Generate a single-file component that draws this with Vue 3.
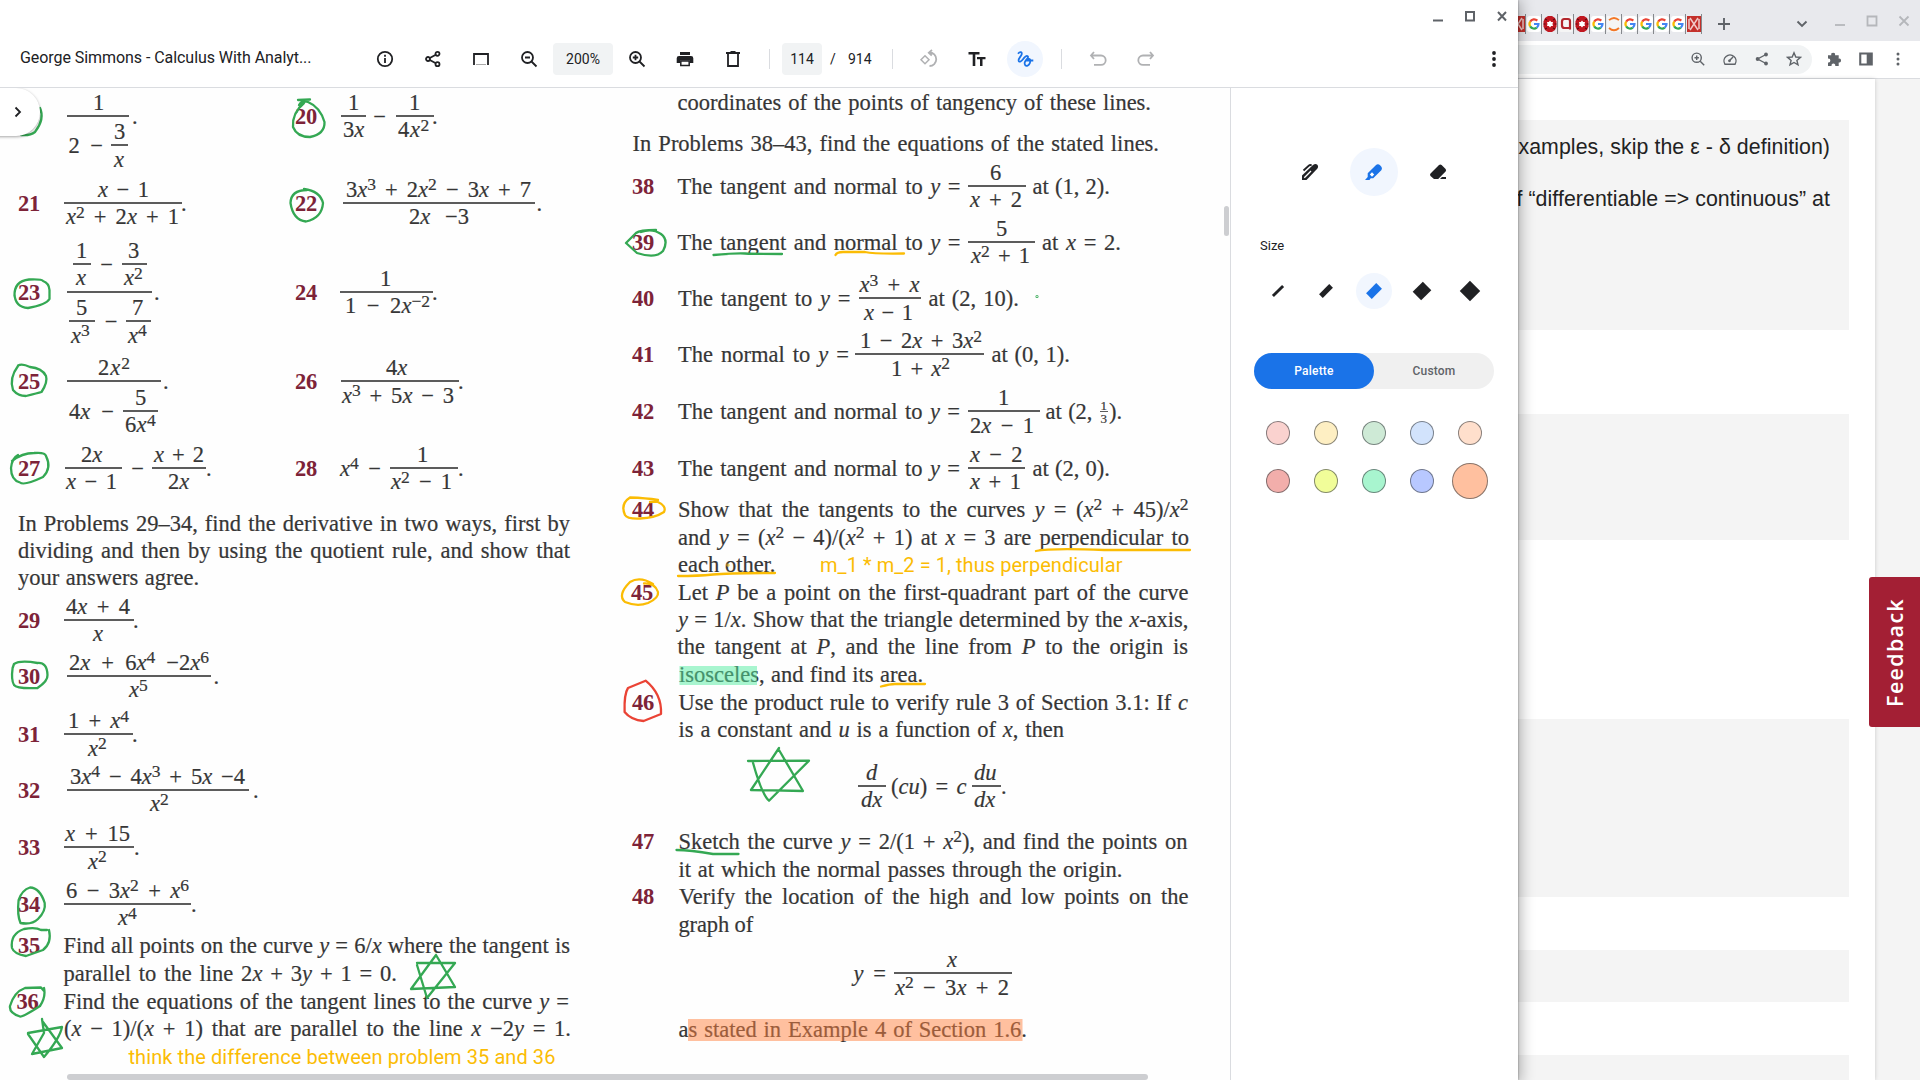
<script setup>
import { h, onMounted, ref } from 'vue'

/* Text markup: {x} is italic, ^2 or ^[-2] is a superscript; a dash that does
   not follow a digit is a minus sign. */
function parse(raw) {
  const src = raw.replace(/(^|[^\d])–/g, '$1−')
  const out = []
  const re = /\{(.+?)\}|\^(?:\[(.+?)\]|(.))/g
  let last = 0
  let m
  while ((m = re.exec(src))) {
    if (m.index > last) out.push(src.slice(last, m.index))
    out.push(m[1] ? h('i', m[1]) : h('sup', m[2] || m[3]))
    last = re.lastIndex
  }
  if (last < src.length) out.push(src.slice(last))
  return out
}

/* Constructors: every piece is set between the x positions a and b. */
const T = (a, b, s, kind = '') => ({ a, b, s, kind })
const N = (a, s) => ({ a, b: a + 22, s, kind: 'num' })
const O = (a, b, s) => ({ a, b, s, kind: 'note' })
const F = (a, b, n, d, kind = '') => ({ a, b, n: [].concat(n), d: [].concat(d), kind })

function Pieces(props) {
  let x = props.from
  return props.items.map((it) => {
    const style = { marginLeft: it.a - x + 'px', width: it.b - it.a + 'px' }
    x = it.b
    if (it.n) {
      const deep = it.d.some((p) => p.n)
      return h('span', { class: ['frac', it.kind], style }, [
        h('span', { class: 'top' }, h(Pieces, { from: it.a, items: it.n })),
        h('span', { class: 'bar' }),
        h('span', { class: ['bot', { deep }] }, h(Pieces, { from: it.a, items: it.d })),
      ])
    }
    return h('span', { class: ['run', it.kind], style }, [h('span', { class: 'ink' }, parse(it.s))])
  })
}
Pieces.props = ['from', 'items']

/* Stack rows whose optical centre is c; plain text rows are given by baseline. */
const ROW = 26
function stack(rows, top) {
  let y = top
  return rows.map(([c, ...items]) => {
    const gap = c - ROW / 2 - y
    y = c + ROW / 2
    return { gap, items }
  })
}
const L = (baseline, ...items) => [baseline - 7.5, ...items]

const left = stack([
  [115.7, F(67, 129, T(93, 102, '1'), [T(68.5, 103, '2 –'), F(111, 128, T(114, 125, '3'), T(114, 125, '{x}'))]), T(132, 138, '.'),
    N(295, '20'), F(341, 366, T(348, 357, '1'), T(343, 363, '3{x}')), T(372, 387, '–', 'c'), F(395.5, 433.5, T(409, 418, '1'), T(398, 430, '4{x}^2')), T(432, 438, '.')],
  [203, N(18, '21'), F(64, 181.5, T(98, 149, '{x} – 1'), T(66, 179, '{x}^2 + 2{x} + 1')), T(181, 186, '.'),
    N(295, '22'), F(343, 535, T(346, 531, '3{x}^3 + 2{x}^2 – 3{x} + 7'), T(409, 469, '2{x} –3')), T(536.5, 542, '.')],
  [291.7, N(18, '23'), F(66.5, 152, [F(73, 90.5, T(76, 87, '1'), T(76, 87, '{x}')), T(99, 114, '–', 'c'), F(121.5, 146.5, T(128, 139, '3'), T(124, 144, '{x}^2'))],
    [F(69, 95, T(76, 87, '5'), T(71, 93, '{x}^3')), T(103, 119, '–', 'c'), F(126, 150.5, T(132, 143, '7'), T(128, 149, '{x}^4'))]), T(154, 160, '.'),
    N(295, '24'), F(340, 432.5, T(380, 390, '1'), T(345, 430, '1 – 2{x}^[–2]')), T(432, 438, '.')],
  [381.2, N(18, '25'), F(66.5, 160.5, T(98, 131, '2{x}^2'), [T(69, 114, '4{x} –'), F(123, 157.5, T(135, 146, '5'), T(125, 156, '6{x}^4'))]), T(163, 169, '.'),
    N(295, '26'), F(341, 458.5, T(386, 408, '4{x}'), T(342, 454, '{x}^3 + 5{x} – 3')), T(458, 464, '.')],
  [467.6, N(18, '27'), F(64.5, 122, T(81, 106, '2{x}'), T(66, 117, '{x} – 1')), T(130, 145, '–', 'c'), F(152, 205.5, T(154, 204, '{x} + 2'), T(168, 191, '2{x}')), T(206, 212, '.'),
    N(295, '28'), T(340, 360, '{x}^4'), T(367, 382, '–', 'c'), F(389.5, 457.5, T(417, 427, '1'), T(391, 452, '{x}^2 – 1')), T(458, 464, '.')],
  L(530.2, T(18, 570, 'In Problems 29–34, find the derivative in two ways, first by')),
  L(557.8, T(18, 570, 'dividing and then by using the quotient rule, and show that')),
  L(585, T(18, 199, 'your answers agree.')),
  [620, N(18, '29'), F(64, 133.5, T(66, 130, '4{x} + 4'), T(93, 104, '{x}')), T(133, 139, '.')],
  [676, N(18, '30'), F(67, 211, T(69, 209, '2{x} + 6{x}^4 –2{x}^6'), T(129, 152, '{x}^5')), T(213.5, 219, '.')],
  [734.3, N(18, '31'), F(64, 132.5, T(68, 129, '1 + {x}^4'), T(88, 108, '{x}^2')), T(132, 138, '.')],
  [790, N(18, '32'), F(67, 249, T(70, 245, '3{x}^4 – 4{x}^3 + 5{x} –4'), T(150, 170, '{x}^2')), T(253, 259, '.')],
  [847.3, N(18, '33'), F(64, 134, T(65, 130, '{x} + 15'), T(88, 109, '{x}^2')), T(134, 140, '.')],
  [904, N(18, '34'), F(64, 191, T(66, 189, '6 – 3{x}^2 + {x}^6'), T(118, 140, '{x}^4')), T(191, 197, '.')],
  L(953, N(18, '35'), T(63.5, 570, 'Find all points on the curve {y} = 6/{x} where the tangent is')),
  L(981, T(63.5, 397, 'parallel to the line 2{x} + 3{y} + 1 = 0.')),
  L(1008.3, N(16.5, '36'), T(63.5, 569, 'Find the equations of the tangent lines to the curve {y} =')),
  L(1035.7, T(64, 571, '({x} – 1)/({x} + 1) that are parallel to the line {x} –2{y} = 1.')),
  L(1064, O(128.5, 555.5, 'think the difference between problem 35 and 36')),
], 88)

const right = stack([
  L(109.7, T(677.5, 1151, 'coordinates of the points of tangency of these lines.')),
  L(150.5, T(632.5, 1159, 'In Problems 38–43, find the equations of the stated lines.')),
  [185.7, N(632, '38'), T(677.5, 960.5, 'The tangent and normal to {y} ='), F(968, 1026, T(990, 1002, '6'), T(970, 1022, '{x} + 2')), T(1032.5, 1110, 'at (1, 2).')],
  [241.8, N(632, '39'), T(677.5, 960.5, 'The tangent and normal to {y} ='), F(968, 1035, T(996, 1008, '5'), T(971, 1030, '{x}^2 + 1')), T(1042, 1121, 'at {x} = 2.')],
  [298.4, N(632, '40'), T(678, 850.5, 'The tangent to {y} ='), F(859, 921, T(859.5, 919.5, '{x}^3 + {x}'), T(864, 913, '{x} – 1')), T(928.5, 1019, 'at (2, 10).')],
  [354.3, N(632, '41'), T(678, 849, 'The normal to {y} ='), F(855, 984, T(860, 982, '1 – 2{x} + 3{x}^2'), T(891, 950, '1 + {x}^2')), T(991.5, 1070, 'at (0, 1).')],
  [411.3, N(632, '42'), T(678, 960, 'The tangent and normal to {y} ='), F(967.5, 1039.5, T(998, 1008, '1'), T(970, 1034, '2{x} – 1')), T(1045.5, 1092.5, 'at (2,'), F(1100, 1108, T(1100.5, 1108, '1'), T(1100.5, 1108, '3'), 'small'), T(1109, 1122, ').')],
  [467.6, N(632, '43'), T(678, 960, 'The tangent and normal to {y} ='), F(968, 1025, T(970, 1022.5, '{x} – 2'), T(970, 1021, '{x} + 1')), T(1032.5, 1110, 'at (2, 0).')],
  L(516.2, N(632, '44'), T(678, 1188.5, 'Show that the tangents to the curves {y} = ({x}^2 + 45)/{x}^2')),
  L(544.3, T(678, 1189, 'and {y} = ({x}^2 – 4)/({x}^2 + 1) at {x} = 3 are perpendicular to')),
  L(572, T(678, 775.5, 'each other.'), O(820, 1122.5, 'm_1 * m_2 = 1, thus perpendicular')),
  L(599.3, N(631, '45'), T(678, 1188.5, 'Let {P} be a point on the first-quadrant part of the curve')),
  L(626.7, T(678, 1188.5, '{y} = 1/{x}. Show that the triangle determined by the {x}-axis,')),
  L(654, T(677.5, 1188, 'the tangent at {P}, and the line from {P} to the origin is')),
  L(681.7, T(679, 923, 'isosceles, and find its area.')),
  L(709.3, N(632, '46'), T(678.5, 1188, 'Use the product rule to verify rule 3 of Section 3.1: If {c}')),
  L(737, T(678.5, 1064, 'is a constant and {u} is a function of {x}, then')),
  [786, F(858, 886, T(866, 879, '{d}'), T(861, 883, '{dx}')), T(891, 966.5, '({cu}) = {c}'), F(972, 1001, T(974, 998, '{du}'), T(974, 999, '{dx}')), T(1001, 1007, '.')],
  L(848.3, N(632, '47'), T(678.5, 1187.5, 'Sketch the curve {y} = 2/(1 + {x}^2), and find the points on')),
  L(876.3, T(678.5, 1122.5, 'it at which the normal passes through the origin.')),
  L(903.5, N(632, '48'), T(679, 1188.5, 'Verify the location of the high and low points on the')),
  L(931.3, T(678.5, 753, 'graph of')),
  [973.6, T(853.5, 886, '{y} ='), F(893.5, 1012, T(947, 958, '{x}'), T(895, 1009, '{x}^2 – 3{x} + 2'))],
  L(1036.3, T(678.5, 1027, 'as stated in Example 4 of Section 1.6.')),
], 88)

/* Track each run so that its glyphs fill the typeset measure. */
const page = ref(null)
onMounted(() => {
  for (const run of page.value.querySelectorAll('.run')) {
    const ink = run.firstElementChild
    const n = ink.textContent.length
    const width = parseFloat(run.style.width)
    ink.style.display = 'inline-block'
    const natural = ink.getBoundingClientRect().width
    ink.style.display = ''
    const fixed = !ink.textContent.includes(' ') || run.classList.contains('note')
    if (n > 2 && (fixed || natural > width)) run.style.letterSpacing = (width - natural) / n + 'px'
  }
})

const tabs = ['k', 'G', 'r', 'a', 'r', 'G', 'c', 'G', 'G', 'G', 'G', 'M']
const sizes = [2.9, 5.2, 8, 12, 14.5]
const swatches = ['#fad2cf', '#feefc3', '#ceead6', '#d2e3fc', '#ffdfcc', '#f2aeab', '#f1fd99', '#a8f5cf', '#b8c8ff', '#ffc09f']
</script>

<template>
  <div class="desktop">
    <section class="viewer">
      <div class="titlebar">
        <svg class="wc" viewBox="0 0 16 16"><path d="M3 12.500h10" /></svg>
        <svg class="wc" viewBox="0 0 16 16"><path d="M4 4h8v8.500h-8z" /></svg>
        <svg class="wc" viewBox="0 0 16 16"><path d="M4 4l8 8.500M12 4l-8 8.500" /></svg>
      </div>
      <header class="toolbar">
        <div class="doc-title">George Simmons - Calculus With Analyt...</div>
        <span class="cell"><svg viewBox="0 0 20 20"><circle cx="10" cy="10" r="7.200" class="s2" /><path d="M10 9v5M10 5.800v2" class="s2" /></svg></span>
        <span class="cell"><svg viewBox="0 0 20 20"><g class="s2"><circle cx="5" cy="10" r="2" /><circle cx="14.500" cy="4.800" r="2" /><circle cx="14.500" cy="15.200" r="2" /><path d="M6.800 9l6-3.300M6.800 11l6 3.300" /></g></svg></span>
        <span class="cell"><svg viewBox="0 0 20 20"><path d="M3 16V5h14v11" class="s2" /><path d="M5 15.500h10" class="faint" /></svg></span>
        <span class="cell"><svg viewBox="0 0 20 20"><circle cx="8.500" cy="8.500" r="5.500" class="s2" /><path d="M12.500 12.500l5 5M6 8.500h5" class="s2" /></svg></span>
        <span class="chip zoom">200%</span>
        <span class="cell"><svg viewBox="0 0 20 20"><circle cx="8.500" cy="8.500" r="5.500" class="s2" /><path d="M12.500 12.500l5 5M5.800 8.500h5.400M8.500 5.800v5.400" class="s2" /></svg></span>
        <span class="cell"><svg viewBox="0 0 20 20"><path d="M5 3h10v3H5zM4 7h12a2.300 2.300 0 0 1 2.300 2.300V14H15v-2.500H5V14H1.700V9.300A2.300 2.300 0 0 1 4 7z" /><path d="M5.800 12h8.400v4.500H5.800z" class="s15" /></svg></span>
        <span class="cell"><svg viewBox="0 0 20 20"><path d="M3 4h14M7.500 3h5M5 4.500v12.500h10V4.500" class="s2" /></svg></span>
        <span class="rule r1"></span>
        <span class="chip pg">114</span>
        <span class="slash">/</span><span class="total">914</span>
        <span class="rule r2"></span>
        <span class="cell dim"><svg viewBox="0 0 20 20"><path d="M6 6.800l4 4-4 4-4-4z" class="s15" /><path d="M10.500 3.500a6.700 6.700 0 0 1 0 13.500M13 1l-3.200 2.700 3 2.800" class="s2" /></svg></span>
        <span class="cell"><svg viewBox="0 0 20 20"><path d="M1.500 3h11v2.500H8.300V17H5.700V5.500H1.500zM10 8h8.500v2.300h-3V17h-2.500v-6.700H10z" /></svg></span>
        <span class="cell on"><svg viewBox="0 0 20 20"><path d="M3 4.800C4.800 2.400 7.300 2.800 6.700 5.200 6.200 7.300 3 9.600 3.600 11.700 4.300 13.800 6.500 12.300 8 10.300 9.700 8 11.300 6.300 12.700 7.200 14.300 8.400 10.300 11 9.700 13.500 9.200 16 10.800 17.300 12.600 16.600 14.800 15.600 15.700 12.500 15.100 10.700 14.400 9.200 12.300 9.800 11.700 11.500H18.300" class="s2" /></svg></span>
        <span class="rule r3"></span>
        <span class="cell dim"><svg viewBox="0 0 20 20"><path d="M6 3L3 6.500 6 10M3.500 6.500H13a4.700 4.700 0 0 1 0 9.400H6" class="s2" /></svg></span>
        <span class="cell dim"><svg viewBox="0 0 20 20"><path d="M14 3l3 3.500-3 3.500M16.500 6.500H7a4.700 4.700 0 0 0 0 9.400h7" class="s2" /></svg></span>
        <span class="cell more"><svg viewBox="0 0 20 20"><circle cx="10" cy="4" r="1.900" /><circle cx="10" cy="10" r="1.900" /><circle cx="10" cy="16" r="1.900" /></svg></span>
      </header>

      <div class="body">
        <main ref="page" class="page">
          <div class="col">
            <div v-for="(r, i) in left" :key="i" class="row" :style="{ marginTop: r.gap + 'px' }"><Pieces :from="0" :items="r.items" /></div>
          </div>
          <div class="col">
            <div v-for="(r, i) in right" :key="i" class="row" :style="{ marginTop: r.gap + 'px' }"><Pieces :from="620" :items="r.items" /></div>
          </div>

          <svg class="ink-layer" viewBox="0 88 1230 992">
            <g class="marker">
              <rect x="679.500" y="666" width="77.500" height="19" fill="#51eb9f" />
              <rect x="688" y="1019" width="334.500" height="22" fill="#ff813f" />
            </g>
            <g class="pen green">
              <path d="M40 108Q45 119 35 132 30 136 21 135" />
              <path d="M298 100L310 99.500M304 103Q292 113 293 127 297 137 310 137 325 134 324.500 122 320 107 308 102 302 100 299 105" />
              <path d="M307 190Q291 190 290.500 203 293 220 306 221.500 322 218 323 203 320 191 304 189" />
              <path d="M14.500 296Q14 281 29 279.500 42 279 43 281 49 283 49.500 290V299Q46 305 28 308 15 307 14.500 294" />
              <path d="M18 366Q9 378 13 390 18 396 26 396 38 393 41.500 392 48 382 46 376 42 368 30 367 22 363 18 365.500" />
              <path d="M12 461Q22 453 34 453 45 452 46 456 52 468 43 477 24 486 20 482.500 11 480 11 468 12 458 18 455" />
              <path d="M12.600 668Q11 680 14 685 17 689 37.500 688 48 681 47.500 675 47 662 37.500 663 20 660 14 664L12.600 668" />
              <path d="M18.600 900Q17 915 20.500 923 32 925 38 919 46 911 44.700 903 40 888 30 887.500 22 890 18.600 900" />
              <path d="M49 930Q52 943 43 950L26 956Q14 954 12 948 10 934 24 929 36 927 41 930L47 930" />
              <path d="M44 988Q46 997 40 1006 23 1017 20 1016.500 9 1013 10 1006 14 992 25 988L41 987.500 44 991" />
              <path d="M42 1019L44 1033 32 1054 62 1048 43 1022M28 1033L62 1027Q60 1038 44 1057L28 1034" />
              <path d="M436 955L411 989 455 987 436 955M417 963H455L427 998 417 965" />
              <path d="M656 230Q640 230 636 233L626 243 637 253Q656 259 663 251 669 240 661 234 652 228 641 232" />
              <path d="M713.500 255Q735 253 745 253.500T782 254" />
              <path d="M779 748L751 790 803 791 779 750M748 761L809 760.700 769 800.700Q762 795 753 762.700" />
              <path d="M676.500 850Q690 850 713 854H738.500" />
              <circle cx="1037" cy="296.500" r=".400" />
            </g>
            <g class="pen amber">
              <path d="M835.500 255Q837 252 843 252H865Q874 254 904 253.500" />
              <path d="M658 500Q646 498 630 497.500 620 504 625 515 627 519 640 518.500 655 518 664 512 667 506 657 501.500L650 502" />
              <path d="M653 584Q640 576 630 582 617 595 625 602 637 607 648 603 659 598 658 592 655 583 644 583.500" />
              <path d="M1036 551Q1050 548 1104 550H1190M678 576Q698 576 713 574.500T775 573" />
              <path d="M881 686.500Q890 684 895 684H925" />
              <circle cx="728" cy="565" r=".400" />
            </g>
            <g class="pen red"><path d="M645.600 680.700L628 688Q624 694 624.600 712 631 720 643.600 721L661 714Q662 694 645.600 680.700z" /></g>
          </svg>
          <button class="drawer"><svg viewBox="0 0 20 20"><path d="M7.500 5.500L12 10l-4.500 4.500" class="s2" /></svg></button>
          <span class="thumb-v"></span>
          <span class="thumb-h"></span>
        </main>

        <aside class="panel">
          <div class="tools">
            <span class="tool"><svg viewBox="0 0 20 20"><path d="M2 13.500L13 3Q15.500 1 17.300 2.700 19 4.600 17 7L6.500 18H2z" /><path d="M3.500 8.500L9 3.500q1.200-1 2.600 0" class="s2" /><path d="M4.300 15.700l6.700-6.700" class="w" /></svg></span>
            <span class="tool on"><svg viewBox="0 0 20 20"><path d="M3.700 11.300L11.800 3.200Q14 1.300 16.300 3.500 19 6 17.300 8.200L9.200 16.300H6.700L5.500 18H1L3.700 15z" /><path d="M8 10.300l2.200 2.200-2.200 2.200-2.200-2.200z" fill="#fff" /></svg></span>
            <span class="tool"><svg viewBox="0 0 20 20"><path d="M2.500 11.500L11 3q1.300-1 2.600 0l4 4q1 1.300 0 2.600L10.200 17H6l-3.500-3q-1-1.300 0-2.500zM14 15h4v2h-6z" /></svg></span>
          </div>
          <div class="label">Size</div>
          <div class="sizes">
            <span v-for="(s, i) in sizes" :key="s" class="size" :class="{ on: i === 2 }">
              <svg viewBox="0 0 24 24"><rect x="4.800" :y="12 - s / 2" width="14.400" :height="s" transform="rotate(-45 12 12)" /></svg>
            </span>
          </div>
          <div class="segment"><span class="seg active">Palette</span><span class="seg">Custom</span></div>
          <div class="swatches">
            <span v-for="(c, i) in swatches" :key="c" class="swatch"><i :class="{ big: i === 9 }" :style="{ background: c }"></i></span>
          </div>
        </aside>
      </div>
    </section>

    <section class="browser">
      <div class="tabs">
        <span v-for="(t, i) in tabs" :key="i" class="tab">
          <svg v-if="t === 'G'" viewBox="0 0 14 16"><rect width="14" height="16" rx="3" fill="#fff" /><g fill="none" stroke-width="2.200"><path d="M3.200 5.600A4.500 4.500 0 0 1 10.300 4.600" stroke="#ea4335" /><path d="M3.200 5.600a4.500 4.500 0 0 0 0 4.800" stroke="#fbbc04" /><path d="M3.200 10.400a4.500 4.500 0 0 0 6.600 1.200" stroke="#34a853" /><path d="M7 8h4.500q0 2.200-1.700 3.600" stroke="#4285f4" /></g></svg>
          <svg v-else-if="t === 'r'" viewBox="0 0 14 16"><path d="M5 0h4l3 2 1.500 3.500v5L12 14l-3 2H5l-3-2-1.500-3.500v-5L2 2z" fill="#c01720" /><path d="M2 3l2 1M12 3l-2 1M2 13l2-1M12 13l-2-1M.5 8h2M13.500 8h-2" stroke="#5c0a10" stroke-width="1.200" /><path d="M7 4.500l1.200 1.500H10L9.500 8l.5 2H8.200L7 11.500 5.800 10H4l.5-2L4 6h1.800z" fill="#fff" /></svg>
          <svg v-else-if="t === 'a'" viewBox="0 0 14 16"><rect width="14" height="16" rx="2" fill="#f5f5f5" /><path d="M3.500 4.500Q3.500 3 5 3h4q2 0 2 2v8.500M11 12H5.500Q3 12 3 9.500v-4Q3 3 5.500 3" fill="none" stroke="#b3262d" stroke-width="2.200" /></svg>
          <svg v-else-if="t === 'c'" viewBox="0 0 14 16"><rect width="14" height="16" fill="#f5f5f5" /><path d="M2 4.200q5-4.500 10 0M2 12q5 4.500 10 0" fill="none" stroke="#f37726" stroke-width="1.800" /></svg>
          <svg v-else viewBox="0 0 14 16"><rect width="14" height="16" fill="#c4302b" /><path d="M3 2l8 12M11 2l-8 12M2 3v10M12 3v10" stroke="#fff" stroke-opacity=".75" stroke-width="1.500" /></svg>
        </span>
        <svg class="plus" viewBox="0 0 20 20"><path d="M10 4v12M4 10h12" /></svg>
        <svg class="chev" viewBox="0 0 20 20"><path d="M5.500 7.500L10 12l4.500-4.500" /></svg>
        <svg class="bw" viewBox="0 0 16 16"><path d="M3 12h10" /></svg>
        <svg class="bw" viewBox="0 0 16 16"><path d="M3.500 3.500h9v9h-9z" /></svg>
        <svg class="bw" viewBox="0 0 16 16"><path d="M3.500 3.500l9 9M12.500 3.500l-9 9" /></svg>
      </div>
      <div class="address">
        <div class="omni">
          <span class="bi"><svg viewBox="0 0 16 16"><circle cx="6.700" cy="6.700" r="4.600" class="l" /><path d="M10.200 10.200l4 4M4.500 6.700h4.400M6.700 4.500v4.400" class="l" /></svg></span>
          <span class="bi"><svg viewBox="0 0 16 16"><path d="M3 13.300a6 6 0 1 1 10 0zM7.300 9.800L11 6" class="l" /><circle cx="7.500" cy="9.800" r="1.400" /></svg></span>
          <span class="bi"><svg viewBox="0 0 16 16"><circle cx="3.600" cy="8" r="1.900" /><circle cx="12" cy="3.500" r="1.900" /><circle cx="12" cy="12.500" r="1.900" /><path d="M12 3.500L3.600 8l8.400 4.500" class="l" /></svg></span>
          <span class="bi"><svg viewBox="0 0 16 16"><path d="M8 1.800l1.800 4.200 4.600.4-3.500 3 1.100 4.500L8 11.500l-4 2.400 1.100-4.500-3.500-3 4.600-.4z" class="l" /></svg></span>
        </div>
        <span class="bi"><svg viewBox="0 0 16 16"><path d="M2 4.200h3.300a1.900 1.900 0 1 1 3.700 0h3.700v3.500a1.900 1.900 0 1 1 0 3.700V15H9.200a1.900 1.900 0 1 0-3.600 0H2v-3.600a1.900 1.900 0 1 0 0-3.700z" /></svg></span>
        <span class="bi"><svg viewBox="0 0 16 16"><path d="M1.200 1.500h13.600v13H1.200zM3.300 3.600v8.800h5.400V3.600z" fill-rule="evenodd" /></svg></span>
        <span class="bi"><svg viewBox="0 0 16 16"><circle cx="8" cy="3" r="1.500" /><circle cx="8" cy="8" r="1.500" /><circle cx="8" cy="13" r="1.500" /></svg></span>
      </div>
      <div class="site">
        <div class="sheet">
          <div class="card c1">
            <p>xamples, skip the ε - δ definition)</p>
            <p>f “differentiable =&gt; continuous” at</p>
          </div>
          <div class="card c2"></div>
          <div class="card c3"></div>
          <div class="card c4"></div>
          <div class="card c5"></div>
        </div>
        <button class="feedback"><span>Feedback</span></button>
      </div>
    </section>
  </div>
</template>

<style>
html, body { margin: 0; overflow: hidden; background: #fff; }
</style>

<style scoped>
.desktop { position: relative; display: flex; width: 1920px; height: 1080px; overflow: hidden; font-family: Roboto, "Liberation Sans", sans-serif; color: #202124; }
button { border: 0; padding: 0; font: inherit; }
svg { display: block; }

.viewer { position: relative; z-index: 2; display: flex; flex-direction: column; flex: none; width: 1518px; height: 1080px; background: #fff; box-shadow: 0 2px 14px 2px rgba(0, 0, 0, .32), 0 0 2px rgba(0, 0, 0, .4); }
.titlebar { display: flex; justify-content: flex-end; gap: 16px; height: 32px; padding-right: 8px; box-sizing: border-box; padding-top: 8px; }
.wc { width: 16px; height: 16px; fill: none; stroke: #5f6368; stroke-width: 2; }
.toolbar { display: flex; align-items: center; height: 56px; padding-bottom: 1px; box-sizing: border-box; border-bottom: 1px solid #dadce0; font-size: 14px; }
.doc-title { width: 341px; padding-left: 20px; font-size: 16px; line-height: 20px; letter-spacing: -.06px; white-space: nowrap; margin-top: -3px; }
.cell { display: flex; flex: none; align-items: center; justify-content: center; width: 48px; height: 36px; }
.cell svg, .tool svg, .drawer svg { width: 20px; height: 20px; }
.s2 { fill: none; stroke: currentColor; stroke-width: 1.8; }
.s15 { fill: none; stroke: currentColor; stroke-width: 1.5; }
.w { fill: none; stroke: #fff; stroke-width: 1.3; }
.faint { stroke: #aaa; fill: none; }
.cell svg, .tool svg { fill: currentColor; color: #202124; }
.cell.dim svg { color: #b0b1b3; }
.chip { display: flex; flex: none; align-items: center; justify-content: center; height: 32px; border-radius: 4px; background: #f1f3f4; }
.zoom { width: 60px; }
.pg { width: 40px; margin-left: 12px; }
.rule { flex: none; width: 1px; height: 20px; background: #dadce0; }
.r1 { margin-left: 12px; }
.slash { width: 6px; margin-left: 8px; }
.total { width: 26px; margin-left: 12px; }
.r2 { margin-left: 18px; margin-right: 12px; }
.r3 { margin: 0 12px; }
.cell.on { width: 36px; margin: 0 6px; border-radius: 50%; background: #f1f6fe; }
.cell.on svg, .tool.on svg { color: #1a73e8; }
.more { margin-left: auto; }

.body { display: flex; flex: 1; min-height: 0; }
.page { position: relative; display: flex; flex: none; width: 1230px; overflow: hidden; background: #fefefe; font-family: "Liberation Serif", serif; font-size: 22.500px; line-height: 23px; color: #363636; -webkit-text-stroke: .2px #363636; }
.col { display: flex; flex: none; flex-direction: column; width: 620px; }
.row { display: flex; flex: none; align-items: center; height: 26px; }
.page :deep(.run) { display: block; flex: none; height: 22px; white-space: nowrap; text-align-last: justify; }
.page :deep(.num) { font-weight: 700; color: #7d2338; letter-spacing: -.3px; -webkit-text-stroke: 0; }
.page :deep(.c) { text-align-last: center; }
.page :deep(.note) { font-family: Roboto, sans-serif; font-size: 20px; line-height: 24px; color: #fbbc04; text-align-last: left; -webkit-text-stroke: 0; }
.page :deep(sup) { position: relative; top: -6.500px; font-size: 17.500px; line-height: 0; vertical-align: baseline; }
.page :deep(.frac) { display: grid; flex: none; grid-template-rows: 1fr 2px 1fr; }
.page :deep(.bar) { background: #5c5c5c; }
.page :deep(.top) { display: flex; align-items: center; align-self: end; padding-bottom: 2px; }
.page :deep(.bot) { display: flex; align-items: center; align-self: start; padding-top: 1.500px; }
.page :deep(.bot.deep) { padding-top: 3.500px; }
.page :deep(.small) { font-size: 13px; grid-template-rows: 1fr 1px 1fr; }
.page :deep(.small .run) { height: 11px; line-height: 11px; }
.page :deep(.small .top) { padding-bottom: 0; }
.page :deep(.small .bot) { padding-top: 1px; }

.ink-layer { position: absolute; left: 0; top: 0; width: 1230px; height: 992px; }
.marker { opacity: .5; }
.pen { fill: none; stroke-width: 2.3; stroke-linecap: round; stroke-linejoin: round; }
.green { stroke: #34a853; }
.amber { stroke: #fbbc04; }
.red { stroke: #ea4335; }
.drawer { position: absolute; left: -8px; top: 0; display: flex; align-items: center; justify-content: flex-end; width: 48px; height: 48px; padding-right: 12px; border-radius: 0 24px 24px 0; background: #fff; box-shadow: 0 1px 3px rgba(0, 0, 0, .35); color: #202124; }
.thumb-v { position: absolute; right: 1px; top: 118px; width: 5px; height: 30px; border-radius: 3px; background: #cdced1; }
.thumb-h { position: absolute; left: 67px; bottom: 0; width: 1081px; height: 6px; border-radius: 3px; background: #cdced1; }

.panel { flex: 1; border-left: 1px solid #dadce0; }
.tools { display: flex; gap: 16px; margin: 60px 0 0 55px; }
.tool { display: flex; align-items: center; justify-content: center; width: 48px; height: 48px; border-radius: 50%; }
.tool.on, .size.on { background: #f1f6fe; }
.label { margin: 42px 0 0 29px; font-size: 13px; line-height: 16px; }
.sizes { display: flex; gap: 12px; margin: 19px 0 0 29px; }
.size { display: flex; align-items: center; justify-content: center; width: 36px; height: 36px; border-radius: 50%; fill: #202124; }
.size svg { width: 24px; height: 24px; }
.size.on { fill: #1a73e8; }
.segment { display: flex; width: 240px; height: 36px; margin: 44px 0 0 23px; border-radius: 18px; background: #f0f0f0; }
.seg { display: flex; align-items: center; justify-content: center; width: 120px; border-radius: 18px; font-size: 12px; font-weight: 500; color: #5f6368; letter-spacing: .2px; }
.seg.active { background: #1a73e8; color: #fff; }
.swatches { display: grid; grid-template-columns: repeat(5, 48px); grid-auto-rows: 48px; margin: 20px 0 0 23px; }
.swatch { display: flex; align-items: center; justify-content: center; }
.swatch i { box-sizing: border-box; width: 24px; height: 24px; border: 1px solid rgba(60, 64, 67, .6); border-radius: 50%; }
.swatch .big { width: 36px; height: 36px; }

.browser { display: flex; flex: none; flex-direction: column; width: 402px; height: 1080px; background: #fff; }
.tabs { display: flex; align-items: center; height: 41px; padding-top: 7px; box-sizing: border-box; background: #e8e9ed; }
.tab { display: flex; flex: none; align-items: center; width: 16px; height: 20px; box-sizing: border-box; padding-left: 1px; border-right: 1px solid #85888c; }
.tab:first-child { margin-left: -8px; }
.tab svg { width: 14px; height: 16px; }
.plus, .chev { flex: none; width: 20px; height: 20px; fill: none; stroke: #5f6368; stroke-width: 1.9; }
.plus { margin-left: 12px; }
.chev { margin-left: 58px; }
.bw { flex: none; width: 16px; height: 16px; margin-top: -6px; margin-left: 16px; fill: none; stroke: #b5b7bb; stroke-width: 1.8; }
.chev + .bw { margin-left: 20px; }
.address { display: flex; align-items: center; height: 38px; padding-bottom: 1px; box-sizing: border-box; border-bottom: 1px solid #dadce0; }
.omni { display: flex; align-items: center; justify-content: flex-end; width: 294px; height: 29px; padding-right: 2px; margin-right: 6px; box-sizing: border-box; border-radius: 0 15px 15px 0; background: #f1f3f4; }
.bi { display: flex; flex: none; align-items: center; justify-content: center; width: 32px; fill: #5f6368; }
.bi svg { width: 16px; height: 16px; }
.l { fill: none; stroke: #5f6368; stroke-width: 1.4; }
.site { position: relative; display: flex; flex: 1; min-height: 0; background: #f4f4f4; }
.sheet { width: 357px; background: #fff; box-shadow: 0 0 4px rgba(0, 0, 0, .18); overflow: hidden; }
.card { width: 331px; box-sizing: border-box; background: #f4f4f4; }
.c1 { display: flex; flex-direction: column; align-items: flex-end; height: 210px; margin-top: 41px; padding: 14.500px 19px 0 0; font: 21.330px/24px "Liberation Sans", Arial, sans-serif; letter-spacing: .06px; color: #222; white-space: nowrap; }
.c1 p { margin: 0 0 28px; }
.c2 { height: 126px; margin-top: 84px; }
.c3 { height: 178px; margin-top: 179px; }
.c4 { height: 52px; margin-top: 53px; }
.c5 { height: 40px; margin-top: 53px; }
.feedback { position: absolute; right: 0; top: 498px; display: flex; align-items: center; justify-content: center; width: 51px; height: 150px; border-radius: 3px 0 0 3px; background: #a31f34; color: #fff; font: 600 21.500px "Open Sans", "Noto Sans", sans-serif; letter-spacing: 1.3px; }
.feedback span { writing-mode: vertical-rl; transform: rotate(180deg); }
</style>
